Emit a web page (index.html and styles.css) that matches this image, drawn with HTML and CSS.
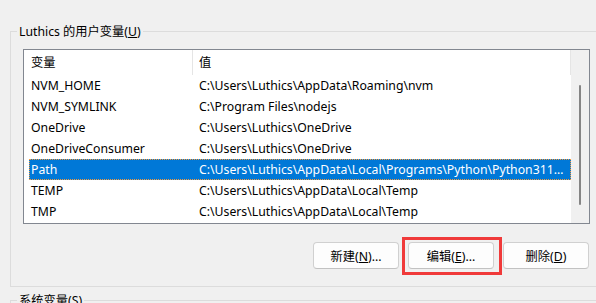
FILE: index.html
```html
<!DOCTYPE html>
<html lang="zh-CN">
<head>
    <meta charset="UTF-8">
    <meta name="viewport" content="width=device-width, initial-scale=1.0">
    <title>环境变量</title>
    <link rel="stylesheet" href="styles.css">
</head>
<body>
    <fieldset class="group">
        <legend>Luthics 的用户变量(<u>U</u>)</legend>
        <div class="listbox">
            <div class="list">
                <div class="list-head">
                    <div class="col-name">变量</div>
                    <div class="col-value">值</div>
                </div>
                <div class="row"><span class="name">NVM_HOME</span><span class="value">C:\Users\Luthics\AppData\Roaming\nvm</span></div>
                <div class="row"><span class="name">NVM_SYMLINK</span><span class="value">C:\Program Files\nodejs</span></div>
                <div class="row"><span class="name">OneDrive</span><span class="value">C:\Users\Luthics\OneDrive</span></div>
                <div class="row"><span class="name">OneDriveConsumer</span><span class="value">C:\Users\Luthics\OneDrive</span></div>
                <div class="row selected"><span class="name">Path</span><span class="value">C:\Users\Luthics\AppData\Local\Programs\Python\Python311…</span></div>
                <div class="row"><span class="name">TEMP</span><span class="value">C:\Users\Luthics\AppData\Local\Temp</span></div>
                <div class="row"><span class="name">TMP</span><span class="value">C:\Users\Luthics\AppData\Local\Temp</span></div>
            </div>
            <div class="scrollbar"><div class="thumb"></div></div>
        </div>
        <div class="buttons">
            <button class="btn">新建(<u>N</u>)...</button>
            <span class="marked"><button class="btn">编辑(<u>E</u>)...</button></span>
            <button class="btn">删除(<u>D</u>)</button>
        </div>
    </fieldset>
    <fieldset class="group next">
        <legend>系统变量(<u>S</u>)</legend>
    </fieldset>
</body>
</html>
```

FILE: styles.css
```css
* {
    box-sizing: border-box;
}
body {
    margin: 0;
    width: 596px;
    height: 303px;
    overflow: hidden;
    background: #f0f0f0;
    color: #000;
    font-family: "Noto Sans", "Noto Sans CJK SC", sans-serif;
    font-size: 12.25px;
}
.group {
    margin: 23px -20px 0 10px;
    padding: 0 0 17px 6px;
    border: 1px solid #dcdcdc;
    min-width: 0;
}
.group legend {
    padding: 0 2px;
    line-height: 17px;
}
.group.next {
    margin-top: 5px;
    height: 40px;
}
.listbox {
    display: flex;
    width: 567px;
    height: 175px;
    margin: 9px 0 0 6px;
    border: 1px solid #828790;
    background: #fff;
}
.list {
    width: 547px;
}
.list-head {
    display: flex;
    height: 25px;
    line-height: 25px;
}
.col-name {
    width: 169px;
    padding-left: 7px;
    border-right: 1px solid #e5e5e5;
}
.col-value {
    flex: 1;
    padding-left: 6px;
    border-right: 1px solid #e5e5e5;
}
.row {
    display: flex;
    height: 21px;
    line-height: 21px;
    margin-left: 5px;
    white-space: nowrap;
}
.row .name {
    width: 163px;
    padding-left: 2px;
}
.row .value {
    flex: 1;
    min-width: 0;
    overflow: hidden;
    padding-left: 7px;
}
.row.selected {
    background: #0078d7;
    color: #fff;
    outline: 1px dotted #f59a3c;
    outline-offset: -1px;
}
.scrollbar {
    width: 18px;
    background: #f0f0f0;
}
.thumb {
    width: 2px;
    height: 120px;
    margin: 35px 0 0 8px;
    border-radius: 1px;
    background: #858585;
}
.buttons {
    display: flex;
    justify-content: flex-end;
    gap: 9px;
    width: 566px;
    margin: 18px 0 0 6px;
}
.btn {
    width: 86px;
    height: 27px;
    padding: 0;
    font: inherit;
    color: #000;
    background: #fdfdfd;
    border: 1px solid #d0d0d0;
    border-bottom-color: #c2c2c2;
    border-radius: 4px;
}
.marked {
    position: relative;
    display: flex;
}
.marked::after {
    content: "";
    position: absolute;
    top: -5px;
    left: -6px;
    right: -8px;
    bottom: -6px;
    border: 3px solid #f03a3a;
}
```
